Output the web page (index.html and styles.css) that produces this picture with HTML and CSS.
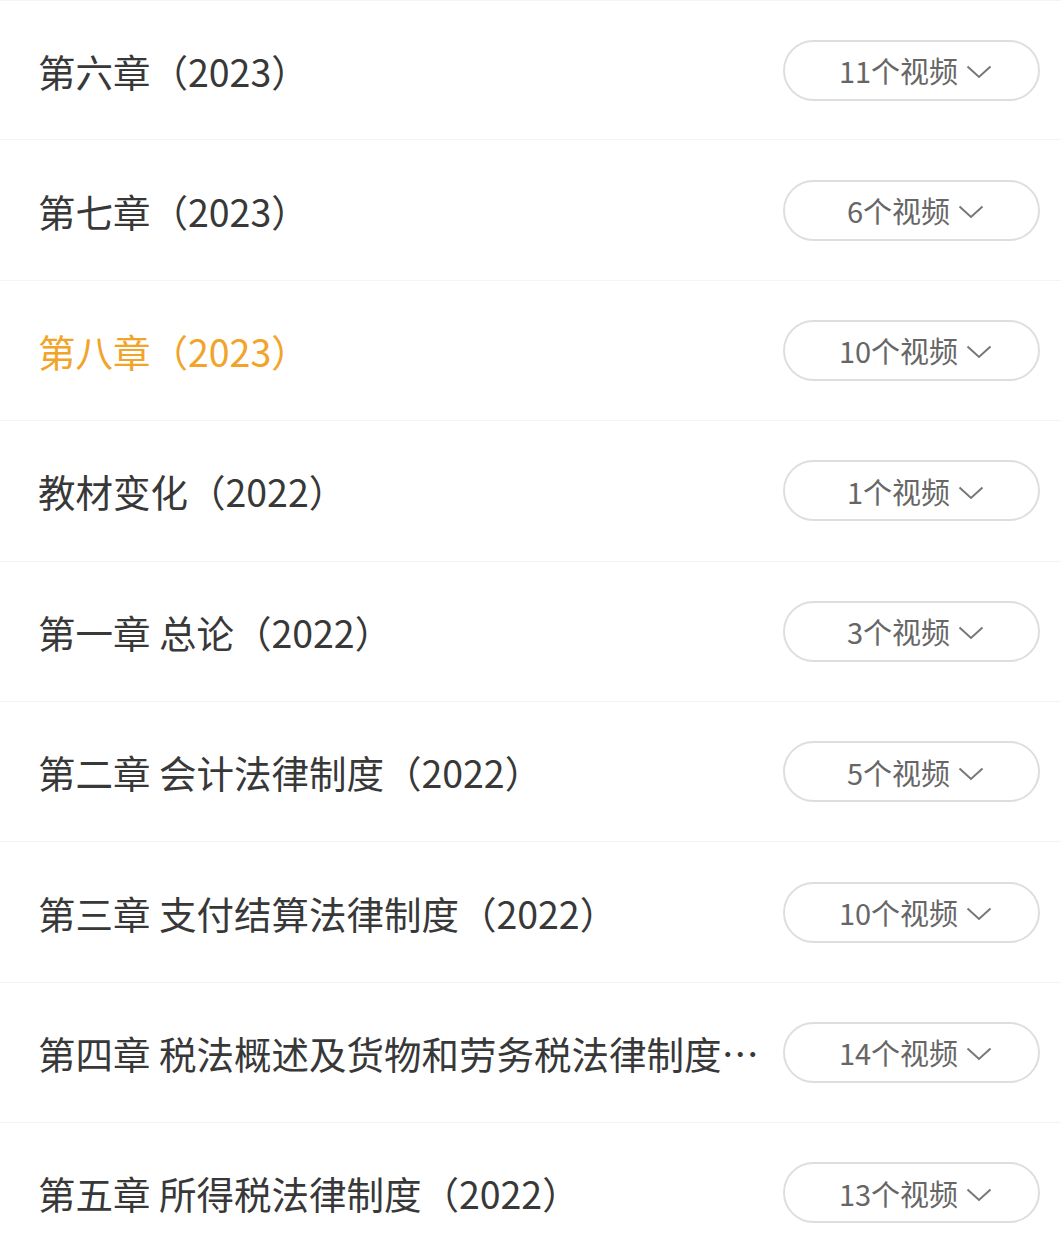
FILE: index.html
```html
<!DOCTYPE html>
<html lang="zh-CN">
<head>
  <meta charset="UTF-8">
  <meta name="viewport" content="width=device-width, initial-scale=1.0">
  <title>章节列表</title>
  <link rel="stylesheet" href="styles.css">
</head>
<body>
  <!-- Chapter list -->
  <ul class="chapter-list">
    <li class="chapter-row">
      <span class="chapter-title">第六章（2023）</span>
      <button class="video-count">11个视频 <svg class="chevron" viewBox="0 0 26 14"><polyline points="1.5,1.5 13,12 24.5,1.5"/></svg></button>
    </li>
    <li class="chapter-row">
      <span class="chapter-title">第七章（2023）</span>
      <button class="video-count">6个视频 <svg class="chevron" viewBox="0 0 26 14"><polyline points="1.5,1.5 13,12 24.5,1.5"/></svg></button>
    </li>
    <li class="chapter-row active">
      <span class="chapter-title">第八章（2023）</span>
      <button class="video-count">10个视频 <svg class="chevron" viewBox="0 0 26 14"><polyline points="1.5,1.5 13,12 24.5,1.5"/></svg></button>
    </li>
    <li class="chapter-row">
      <span class="chapter-title">教材变化（2022）</span>
      <button class="video-count">1个视频 <svg class="chevron" viewBox="0 0 26 14"><polyline points="1.5,1.5 13,12 24.5,1.5"/></svg></button>
    </li>
    <li class="chapter-row">
      <span class="chapter-title">第一章 总论（2022）</span>
      <button class="video-count">3个视频 <svg class="chevron" viewBox="0 0 26 14"><polyline points="1.5,1.5 13,12 24.5,1.5"/></svg></button>
    </li>
    <li class="chapter-row">
      <span class="chapter-title">第二章 会计法律制度（2022）</span>
      <button class="video-count">5个视频 <svg class="chevron" viewBox="0 0 26 14"><polyline points="1.5,1.5 13,12 24.5,1.5"/></svg></button>
    </li>
    <li class="chapter-row">
      <span class="chapter-title">第三章 支付结算法律制度（2022）</span>
      <button class="video-count">10个视频 <svg class="chevron" viewBox="0 0 26 14"><polyline points="1.5,1.5 13,12 24.5,1.5"/></svg></button>
    </li>
    <li class="chapter-row">
      <span class="chapter-title">第四章 税法概述及货物和劳务税法律制度…</span>
      <button class="video-count">14个视频 <svg class="chevron" viewBox="0 0 26 14"><polyline points="1.5,1.5 13,12 24.5,1.5"/></svg></button>
    </li>
    <li class="chapter-row">
      <span class="chapter-title">第五章 所得税法律制度（2022）</span>
      <button class="video-count">13个视频 <svg class="chevron" viewBox="0 0 26 14"><polyline points="1.5,1.5 13,12 24.5,1.5"/></svg></button>
    </li>
  </ul>
</body>
</html>
```
FILE: styles.css
```css
body {
  margin: 0;
  background-color: #fff;
  font-family: "Noto Sans CJK SC", "Noto Sans", sans-serif;
}

/* chapter list */
.chapter-list {
  list-style: none;
  margin: 0;
  padding: 0;
  border-top: 1px solid #f4f4f4;
}

.chapter-row {
  display: flex;
  align-items: center;
  height: 139.4px;
  padding: 0 21px 0 38px;
  border-bottom: 1px solid #f4f4f4;
}

.chapter-row:first-child {
  height: 138.4px;
}

.chapter-title {
  flex: 1;
  min-width: 0;
  margin-right: 18px;
  font-size: 37.5px;
  color: #383838;
  white-space: nowrap;
  overflow: hidden;
}

.chapter-row.active .chapter-title {
  color: #f2a329;
}

/* video count pill */
.video-count {
  flex-shrink: 0;
  display: flex;
  align-items: center;
  justify-content: center;
  gap: 8px;
  box-sizing: border-box;
  width: 257px;
  height: 61px;
  padding: 0 0 0 8px;
  border: 2px solid #dedede;
  border-radius: 31px;
  background-color: #fff;
  font-family: inherit;
  font-size: 29px;
  color: #666;
}

.chevron {
  width: 26px;
  height: 14px;
  margin-top: 4px;
  fill: none;
  stroke: #777;
  stroke-width: 2;
}
```
